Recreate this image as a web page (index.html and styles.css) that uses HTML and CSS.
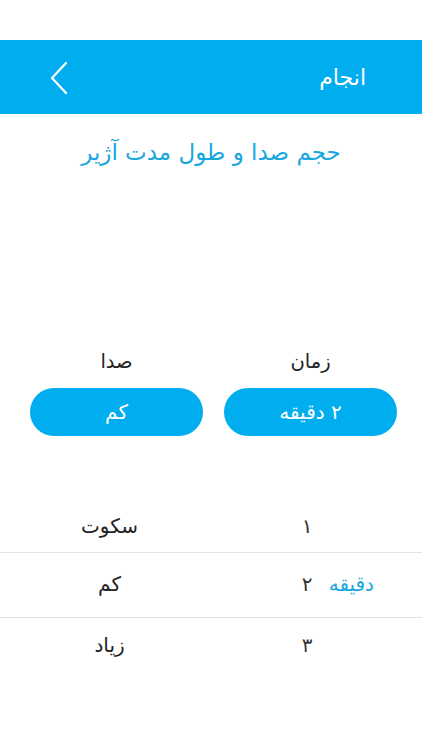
FILE: index.html
```html
<!DOCTYPE html>
<html lang="fa">
<head>
<meta charset="utf-8">
<link rel="stylesheet" href="styles.css">
</head>
<body>
<div class="status"></div>
<header class="bar">
  <span class="done">انجام</span>
  <svg class="back" width="20" height="34" viewBox="0 0 20 34"><path d="M17 2 L3 17 L17 32" fill="none" stroke="#fff" stroke-width="2.2" stroke-linecap="round" stroke-linejoin="round"/></svg>
</header>
<h1 class="title">حجم صدا و طول مدت آژیر</h1>
<section class="controls">
  <div class="col">
    <div class="label">زمان</div>
    <div class="pill">۲ دقیقه</div>
  </div>
  <div class="col">
    <div class="label">صدا</div>
    <div class="pill">کم</div>
  </div>
</section>
<section class="picker">
  <div class="row first">
    <div class="cell num">۱</div>
    <div class="cell">سکوت</div>
  </div>
  <div class="row sel">
    <div class="cell num"><span class="unit">دقیقه</span><span>۲</span></div>
    <div class="cell">کم</div>
  </div>
  <div class="row last">
    <div class="cell num">۳</div>
    <div class="cell">زیاد</div>
  </div>
</section>
</body>
</html>
```
FILE: styles.css
```css
* { box-sizing: border-box; }
html, body { margin: 0; padding: 0; background: #fff; }
body {
  width: 422px;
  height: 750px;
  font-family: "DejaVu Sans", "Noto Sans", sans-serif;
  direction: rtl;
  color: #222;
  overflow: hidden;
}
.status { height: 40px; }
.bar {
  height: 74px;
  background: #00aeef;
  display: flex;
  align-items: center;
  justify-content: space-between;
  padding: 0 56px 0 49px;
}
.done { color: #fff; font-size: 22px; }
.back { display: block; margin-top: 2px; }
.title {
  margin: 23px 0 0;
  text-align: center;
  font-weight: normal;
  font-size: 23px;
  color: #1aa7e0;
  line-height: 30px;
}
.controls {
  margin-top: 182px;
  display: flex;
  justify-content: space-between;
  padding: 0 25px 0 30px;
}
.col { width: 173px; display: flex; flex-direction: column; align-items: center; }
.label { font-size: 19.5px; line-height: 26px; color: #222; }
.pill {
  margin-top: 13px;
  width: 100%;
  height: 48px;
  border-radius: 24px;
  background: #00aeef;
  color: #fff;
  font-size: 20px;
  display: flex;
  align-items: center;
  justify-content: center;
}
.picker { margin-top: 64px; }
.row {
  height: 65px;
  display: flex;
  align-items: flex-start;
  padding-top: 19px;
  font-size: 20px;
  color: #222;
}
.row + .row { border-top: 1px solid #e4e4e4; }
.row.first { height: 52px; padding-top: 14px; }
.row.last { padding-top: 15px; }
.cell { width: 211px; text-align: center; display: flex; justify-content: center; }
.cell.num { position: relative; padding-right: 19px; }
.row .cell:last-child { padding-left: 8px; }
.num { color: #333; }
.unit {
  position: absolute;
  right: 48px;
  color: #1aa7e0;
}
```
